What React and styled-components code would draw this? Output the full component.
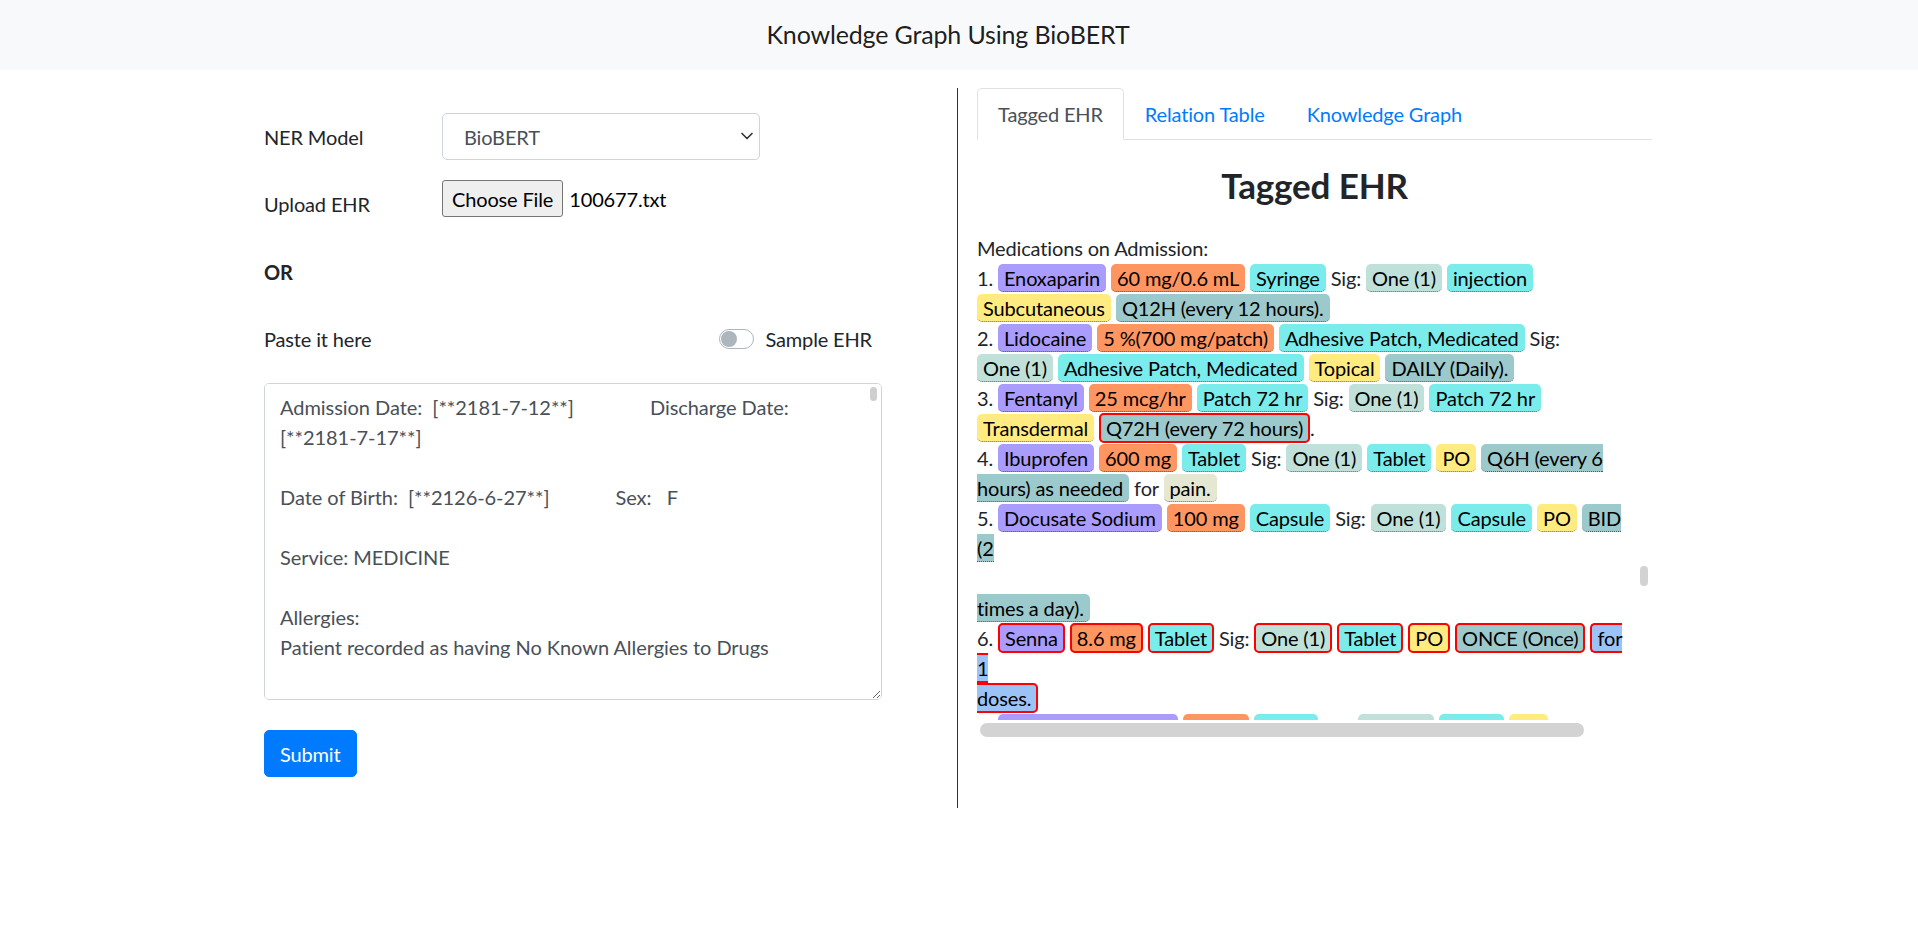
import React from "react";
import styled, { createGlobalStyle } from "styled-components";
import { ChevronDown } from "lucide-react";

const GlobalStyle = createGlobalStyle`
  * { box-sizing: border-box; }
  html, body { margin: 0; padding: 0; background: #fff; }
  body {
    font-family: Lato, "Liberation Sans", sans-serif;
    font-size: 20px;
    line-height: 1.5;
    letter-spacing: -0.15px;
    color: #212529;
  }
`;

const Navbar = styled.header`
  height: 70px;
  padding-right: 22px;
  background: #f8f9fa;
  display: flex;
  align-items: center;
  justify-content: center;
`;

const Brand = styled.h1`
  margin: 0;
  font-size: 25px;
  font-weight: 400;
  line-height: 1.5;
  color: rgba(0, 0, 0, 0.9);
`;

const Main = styled.main`
  display: flex;
  margin-top: 18px;
`;

const FormPanel = styled.section`
  width: 958px;
  padding: 25px 75px 31px 264px;
  border-right: 1px solid #333;
`;

const FieldRow = styled.div`
  display: grid;
  grid-template-columns: 178px auto;
  align-items: start;
  margin-bottom: 20px;
`;

const Label = styled.label`
  padding: 8.5px 0;
  line-height: 30px;
`;

const SelectWrap = styled.div`
  position: relative;
  width: 318px;
`;

const Select = styled.select`
  appearance: none;
  width: 100%;
  height: 47px;
  padding: 7.5px 40px 7.5px 21px;
  font: inherit;
  letter-spacing: inherit;
  color: #495057;
  background: #fff;
  border: 1px solid #ced4da;
  border-radius: 5px;
`;

const SelectArrow = styled(ChevronDown)`
  position: absolute;
  right: 3px;
  top: 13px;
  color: #333;
  pointer-events: none;
`;

const FileField = styled.div`
  display: flex;
  align-items: center;
`;

const FileButton = styled.button`
  height: 37px;
  padding: 0 9px;
  font: inherit;
  letter-spacing: inherit;
  color: #000;
  background: #efefef;
  border: 1px solid #767676;
  border-radius: 3px;
`;

const FileName = styled.span`
  margin-left: 6px;
  color: #000;
`;

const OrText = styled.p`
  margin: 30px 0 0;
  font-weight: 700;
`;

const PasteRow = styled.div`
  display: flex;
  justify-content: space-between;
  align-items: center;
  margin-top: 37px;
  padding-right: 10px;
  line-height: 30px;
`;

const SwitchLabel = styled.label`
  display: flex;
  align-items: center;
  gap: 11px;
`;

const SwitchTrack = styled.span`
  position: relative;
  width: 35px;
  height: 20px;
  border: 1px solid #adb5bd;
  border-radius: 10px;
  background: #fff;
`;

const SwitchKnob = styled.span`
  position: absolute;
  left: 1px;
  top: 1px;
  width: 16px;
  height: 16px;
  border-radius: 50%;
  background: #adb5bd;
`;

const InputWrap = styled.div`
  position: relative;
  margin-top: 29px;
`;

const EhrInput = styled.textarea`
  display: block;
  width: 100%;
  height: 317px;
  padding: 7.5px 15px;
  font: inherit;
  letter-spacing: -0.05px;
  line-height: 30px;
  color: #495057;
  border: 1px solid #ced4da;
  border-radius: 5px;
  resize: vertical;
  scrollbar-width: none;
`;

const InputThumb = styled.span`
  position: absolute;
  right: 5px;
  top: 4px;
  width: 7px;
  height: 14px;
  border-radius: 4px;
  background: #cfcfcf;
  pointer-events: none;
`;

const SubmitButton = styled.button`
  display: block;
  margin-top: 30px;
  padding: 7.5px 15px;
  font: inherit;
  letter-spacing: inherit;
  line-height: 30px;
  color: #fff;
  background: #007bff;
  border: 1px solid #007bff;
  border-radius: 5px;
`;

const ResultPanel = styled.section`
  width: 694px;
  padding-left: 19px;
`;

const Tabs = styled.ul`
  display: flex;
  margin: 0;
  padding: 0;
  list-style: none;
  border-bottom: 1px solid #dee2e6;
`;

const Tab = styled.li`
  margin-bottom: -1px;
  padding: 10px 20px;
  line-height: 30px;
  border: 1px solid transparent;
  border-radius: 5px 5px 0 0;
  color: ${(p) => (p.$active ? "#495057" : "#007bff")};
  background: ${(p) => (p.$active ? "#fff" : "transparent")};
  border-color: ${(p) => (p.$active ? "#dee2e6 #dee2e6 #fff" : "transparent")};
`;

const Heading = styled.h3`
  margin: 24px 0 27px;
  font-size: 35px;
  font-weight: 700;
  line-height: 1.2;
  text-align: center;
`;

const TagScroll = styled.div`
  position: relative;
  height: 505px;
`;

const TagViewport = styled.div`
  width: 660px;
  height: 487px;
  overflow: hidden;
  white-space: nowrap;
  line-height: 30px;
`;

const ScrollThumb = styled.div`
  position: absolute;
  background: #d3d3d3;
  ${(p) =>
    p.$axis === "y"
      ? "left: 663px; top: 333px; width: 8px; height: 20px; border-radius: 4px;"
      : "left: 3px; top: 490px; width: 604px; height: 14px; border-radius: 7px;"}
`;

const tagColors = {
  drug: "#aa9cfc",
  strength: "#ff9561",
  form: "#7aecec",
  dosage: "#bfe1d9",
  route: "#ffeb80",
  frequency: "#9cc9cc",
  reason: "#e4e7d2",
  duration: "#9cc3f5",
};

const Tag = styled.span`
  background: ${(p) => tagColors[p.$kind]};
  color: #000;
  border-radius: 5px;
  -webkit-box-decoration-break: slice;
  box-decoration-break: slice;
  ${(p) =>
    p.$flag
      ? "border: 2px solid #f00; padding: 1px 5px;"
      : "padding: 2px 6px 1px; border-bottom: 1px dotted rgba(0, 0, 0, 0.55);"}
`;

const t = (kind, text, flag = false) => ({ kind, text, flag });

const taggedLines = [
  ["Medications on Admission:"],
  ["1. ", t("drug", "Enoxaparin"), " ", t("strength", "60 mg/0.6 mL"), " ", t("form", "Syringe"), " Sig: ", t("dosage", "One (1)"), " ", t("form", "injection")],
  [t("route", "Subcutaneous"), " ", t("frequency", "Q12H (every 12 hours).")],
  ["2. ", t("drug", "Lidocaine"), " ", t("strength", "5 %(700 mg/patch)"), " ", t("form", "Adhesive Patch, Medicated"), " Sig:"],
  [t("dosage", "One (1)"), " ", t("form", "Adhesive Patch, Medicated"), " ", t("route", "Topical"), " ", t("frequency", "DAILY (Daily).")],
  ["3. ", t("drug", "Fentanyl"), " ", t("strength", "25 mcg/hr"), " ", t("form", "Patch 72 hr"), " Sig: ", t("dosage", "One (1)"), " ", t("form", "Patch 72 hr")],
  [t("route", "Transdermal"), " ", t("frequency", "Q72H (every 72 hours)", true), "."],
  ["4. ", t("drug", "Ibuprofen"), " ", t("strength", "600 mg"), " ", t("form", "Tablet"), " Sig: ", t("dosage", "One (1)"), " ", t("form", "Tablet"), " ", t("route", "PO"), " ", t("frequency", "Q6H (every 6\nhours) as needed"), " for ", t("reason", "pain.")],
  ["5. ", t("drug", "Docusate Sodium"), " ", t("strength", "100 mg"), " ", t("form", "Capsule"), " Sig: ", t("dosage", "One (1)"), " ", t("form", "Capsule"), " ", t("route", "PO"), " ", t("frequency", "BID\n(2\n\ntimes a day).")],
  ["6. ", t("drug", "Senna", true), " ", t("strength", "8.6 mg", true), " ", t("form", "Tablet", true), " Sig: ", t("dosage", "One (1)", true), " ", t("form", "Tablet", true), " ", t("route", "PO", true), " ", t("frequency", "ONCE (Once)", true), " ", t("duration", "for\n1\ndoses.", true)],
  ["7. ", t("drug", "Metoprolol Tartrate"), " ", t("strength", "25 mg"), " ", t("form", "Tablet"), " Sig: ", t("dosage", "One (1)"), " ", t("form", "Tablet"), " ", t("route", "PO"), " BID (2 times a day)."],
];

const withBreaks = (text) =>
  text.split("\n").flatMap((part, i) => (i === 0 ? [part] : [<br key={i} />, part]));

const ehrText = `Admission Date:  [**2181-7-12**]               Discharge Date:  [**2181-7-17**]

Date of Birth:  [**2126-6-27**]             Sex:   F

Service: MEDICINE

Allergies:
Patient recorded as having No Known Allergies to Drugs

Attending:[**First Name3 (LF) 1838**]
Chief Complaint:
Shortness of breath, abdominal pain

Major Surgical or Invasive Procedure:
Paracentesis

History of Present Illness:
55 year old female with metastatic breast cancer to liver and bone, on palliative chemotherapy, who presents with two days of worsening shortness of breath and abdominal distension. She reports decreased oral intake, constipation and increasing pain in her right upper quadrant. In the ED her vitals were stable, labs notable for mild hyponatremia and elevated alkaline phosphatase. CT of the abdomen showed moderate ascites and progression of hepatic metastases.

Past Medical History:
1. Metastatic breast cancer, ER/PR positive, HER2 negative
2. Deep venous thrombosis of the left leg
3. Hypertension
4. Chronic cancer related pain

Social History:
Lives with her husband. Former smoker, quit 20 years ago. No alcohol or drug use.

Family History:
Mother with breast cancer. Father with coronary artery disease.

Physical Exam:
VS: T 98.4 BP 118/72 HR 96 RR 20 O2 sat 95% RA
Gen: thin woman in mild distress
HEENT: anicteric, mucous membranes dry
Lungs: decreased breath sounds at the bases bilaterally
Abd: distended, tender in RUQ, shifting dullness present
Ext: trace edema bilaterally

Brief Hospital Course:
Patient underwent diagnostic and therapeutic paracentesis with removal of 3 liters of fluid with improvement in her symptoms. Fluid studies were not consistent with infection. Her pain was controlled with a fentanyl patch and oral ibuprofen. A bowel regimen was started. Her anticoagulation was continued. She was seen by the oncology and palliative care teams and the plan was discussed with her family.

Medications on Admission:
1. Enoxaparin 60 mg/0.6 mL Syringe Sig: One (1) injection Subcutaneous Q12H (every 12 hours).
2. Lidocaine 5 %(700 mg/patch) Adhesive Patch, Medicated Sig: One (1) Adhesive Patch, Medicated Topical DAILY (Daily).
3. Fentanyl 25 mcg/hr Patch 72 hr Sig: One (1) Patch 72 hr Transdermal Q72H (every 72 hours).
4. Ibuprofen 600 mg Tablet Sig: One (1) Tablet PO Q6H (every 6 hours) as needed for pain.
5. Docusate Sodium 100 mg Capsule Sig: One (1) Capsule PO BID (2 times a day).
6. Senna 8.6 mg Tablet Sig: One (1) Tablet PO ONCE (Once) for 1 doses.
7. Metoprolol Tartrate 25 mg Tablet Sig: One (1) Tablet PO BID (2 times a day).

Discharge Disposition:
Home With Service

Discharge Diagnosis:
Malignant ascites
Metastatic breast cancer

Discharge Condition:
Stable, ambulating, tolerating a regular diet.

Discharge Instructions:
You were admitted with shortness of breath and abdominal swelling caused by fluid in your abdomen. The fluid was removed and your breathing improved. Please take your medications as prescribed and call your doctor if you develop fever, worsening pain, increasing swelling or difficulty breathing.

Followup Instructions:
Please follow up with your oncologist in one week.
`;

export default function App() {
  return (
    <>
      <GlobalStyle />
      <Navbar>
        <Brand>Knowledge Graph Using BioBERT</Brand>
      </Navbar>
      <Main>
        <FormPanel>
          <FieldRow>
            <Label>NER Model</Label>
            <SelectWrap>
              <Select defaultValue="biobert">
                <option value="biobert">BioBERT</option>
              </Select>
              <SelectArrow size={20} strokeWidth={2} />
            </SelectWrap>
          </FieldRow>
          <FieldRow>
            <Label>Upload EHR</Label>
            <FileField>
              <FileButton type="button">Choose File</FileButton>
              <FileName>100677.txt</FileName>
            </FileField>
          </FieldRow>
          <OrText>OR</OrText>
          <PasteRow>
            <span>Paste it here</span>
            <SwitchLabel>
              <SwitchTrack>
                <SwitchKnob />
              </SwitchTrack>
              Sample EHR
            </SwitchLabel>
          </PasteRow>
          <InputWrap>
            <EhrInput rows={10} defaultValue={ehrText} />
            <InputThumb />
          </InputWrap>
          <SubmitButton type="button">Submit</SubmitButton>
        </FormPanel>
        <ResultPanel>
          <Tabs>
            <Tab $active>Tagged EHR</Tab>
            <Tab>Relation Table</Tab>
            <Tab>Knowledge Graph</Tab>
          </Tabs>
          <Heading>Tagged EHR</Heading>
          <TagScroll>
            <TagViewport>
              {taggedLines.map((line, i) => (
                <React.Fragment key={i}>
                  {line.map((seg, j) =>
                    typeof seg === "string" ? (
                      <React.Fragment key={j}>{seg}</React.Fragment>
                    ) : (
                      <Tag key={j} $kind={seg.kind} $flag={seg.flag}>
                        {withBreaks(seg.text)}
                      </Tag>
                    )
                  )}
                  <br />
                </React.Fragment>
              ))}
            </TagViewport>
            <ScrollThumb $axis="y" />
            <ScrollThumb $axis="x" />
          </TagScroll>
        </ResultPanel>
      </Main>
    </>
  );
}
